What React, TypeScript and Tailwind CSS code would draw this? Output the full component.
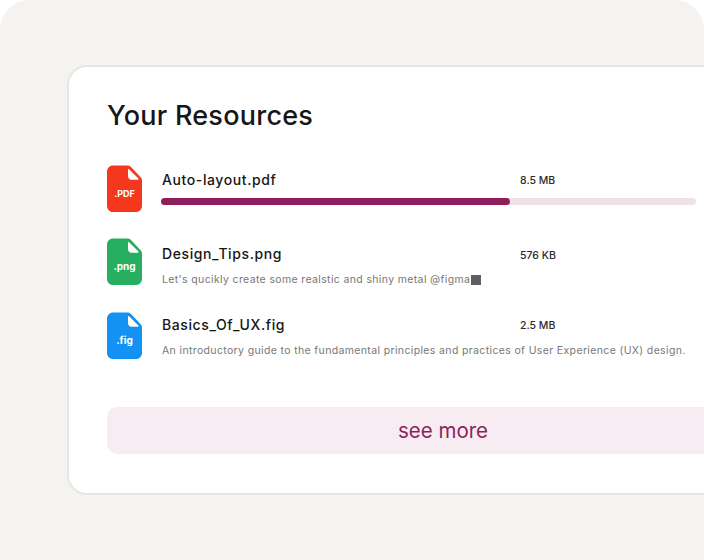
const poppinsLike = "font-['Inter','Liberation_Sans',sans-serif]";

function FileIcon({ label, color, labelClass }: { label: string; color: string; labelClass: string }) {
  return (
    <div className="relative h-[47px] w-[35px] shrink-0">
      <svg width="35" height="47" viewBox="0 0 35 47" className="absolute inset-0">
        <path
          d="M6 0.5H20.5C21.8 0.5 23 1 24 2L33.4 12C34.4 13 35 14.2 35 15.6V41C35 44.3 32.3 47 29 47H6C2.7 47 0 44.3 0 41V6.5C0 3.2 2.7 0.5 6 0.5Z"
          fill={color}
        />
        <path
          d="M21 4.6C21 4 21.7 3.8 22.1 4.2L31.4 13.6C31.9 14.1 31.5 14.8 30.9 14.8H24.5C22.5 14.8 21 13.2 21 11.3V4.6Z"
          fill="#ffffff"
        />
      </svg>
      <span className={`absolute inset-x-0 text-center font-bold leading-none text-white ${labelClass}`}>{label}</span>
    </div>
  );
}

function ResourceRow({
  label,
  color,
  labelClass,
  name,
  size,
  children,
  className,
  headClass,
}: {
  label: string;
  color: string;
  labelClass: string;
  name: string;
  size: string;
  children: React.ReactNode;
  className?: string;
  headClass?: string;
}) {
  return (
    <div className={`flex gap-5 ${className ?? ""}`}>
      <FileIcon label={label} color={color} labelClass={labelClass} />
      <div className="min-w-0 flex-1">
        <div className={`flex h-[28px] items-center ${headClass ?? ""}`}>
          <span className={`w-[358px] text-[14px] font-medium tracking-[0.6px] text-[#161616] ${poppinsLike}`}>{name}</span>
          <span className="pt-[4px] text-[10.5px] font-medium text-[#2b2b2b]">{size}</span>
        </div>
        {children}
      </div>
    </div>
  );
}

export default function App() {
  return (
    <div className="h-[560px] w-[704px] overflow-hidden bg-white font-['Inter',sans-serif]">
      <div className="h-full w-full overflow-hidden rounded-t-[30px] bg-[#f4f3ef] pl-[67px] pt-[65px]">
        <div className="h-[430px] w-[720px] rounded-[20px] border-2 border-[#e6e6e4] bg-white pl-[38px] pt-[29px]">
          <h1 className="text-[27px] font-medium leading-[40px] tracking-[0.25px] text-[#161616]">Your Resources</h1>
          <div className="mt-[29px] w-[589px]">
            <ResourceRow label=".PDF" color="#f5371d" labelClass="top-[24px] text-[9px]" name="Auto-layout.pdf" size="8.5 MB">
              <div className="-ml-px mt-[5px] h-[7px] w-[535px] rounded-full bg-[#f0e1e7]">
                <div className="h-full w-[349px] rounded-full bg-[#8f1f5c]" />
              </div>
            </ResourceRow>
            <ResourceRow
              label=".png"
              color="#27ae60"
              labelClass="top-[23px] text-[10px]"
              name="Design_Tips.png"
              size="576 KB"
              className="mt-[26px]"
              headClass="pt-[3px]"
            >
              <p className={`mt-[6px] flex items-center whitespace-nowrap text-[10.5px] leading-[16px] tracking-[0.36px] text-[#777777] ${poppinsLike}`}>
                Let's qucikly create some realstic and shiny metal @figma
                <span className="ml-[1px] inline-block h-[10px] w-[10px] bg-[#5f5f5f]" />
              </p>
            </ResourceRow>
            <ResourceRow
              label=".fig"
              color="#1492f3"
              labelClass="top-[23px] text-[10px]"
              name="Basics_Of_UX.fig"
              size="2.5 MB"
              className="mt-[24px]"
              headClass="-mt-[2px]"
            >
              <p className={`mt-[5px] whitespace-nowrap text-[10.5px] leading-[16px] tracking-[0.36px] text-[#777777] ${poppinsLike}`}>
                An introductory guide to the fundamental principles and practices of User Experience (UX) design.
              </p>
            </ResourceRow>
          </div>
          <button className="mt-[48px] h-[47px] w-[672px] rounded-[10px] bg-[#f6ecf2] pt-[2px] text-[20.5px] font-normal text-[#8f1f5c]">
            see more
          </button>
        </div>
      </div>
    </div>
  );
}
